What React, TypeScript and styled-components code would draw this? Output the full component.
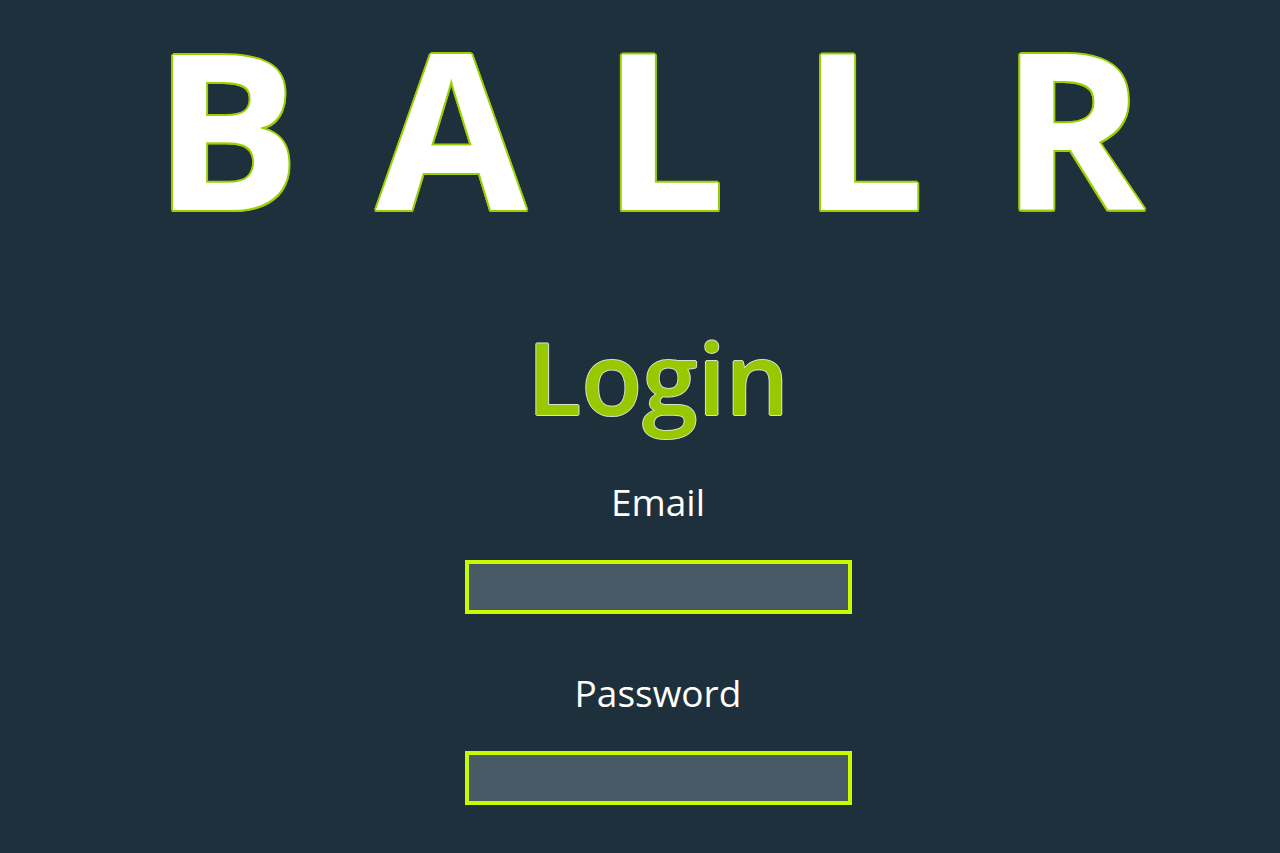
import React from "react";
import styled, { createGlobalStyle } from "styled-components";

const Global = createGlobalStyle`
  html, body { margin: 0; padding: 0; }
  body {
    background: #1e303b;
    font-family: "Open Sans", "Noto Sans", sans-serif;
    min-height: 853px;
  }
`;

const Page = styled.main`
  display: flex;
  flex-direction: column;
  align-items: center;
  padding-left: 36px;
  min-height: 853px;
  box-sizing: border-box;
`;

const Brand = styled.h1`
  margin: 6px 0 0 0;
  padding-left: 58px;
  font-size: 218px;
  line-height: 1.1;
  font-weight: 700;
  color: #ffffff;
  letter-spacing: 76px;
  white-space: nowrap;
  text-shadow:
    2px 0 0 #9ccf00, -2px 0 0 #9ccf00, 0 2px 0 #9ccf00, 0 -2px 0 #9ccf00,
    1.5px 1.5px 0 #9ccf00, -1.5px 1.5px 0 #9ccf00, 1.5px -1.5px 0 #9ccf00, -1.5px -1.5px 0 #9ccf00;
`;

const Title = styled.h2`
  margin: 80px 0 0 0;
  font-size: 100px;
  line-height: 1;
  font-weight: 600;
  color: #97c800;
  text-shadow:
    1px 0 0 #d8e0d0, -1px 0 0 #d8e0d0, 0 1px 0 #d8e0d0, 0 -1px 0 #d8e0d0;
`;

const Form = styled.form`
  display: flex;
  flex-direction: column;
  align-items: center;
`;

const Label = styled.label<{ $first?: boolean }>`
  margin-top: ${(p) => (p.$first ? "57px" : "60px")};
  font-size: 37px;
  line-height: 1;
  color: #ffffff;
`;

const Input = styled.input`
  margin-top: 40px;
  width: 387px;
  height: 54px;
  box-sizing: border-box;
  border: 4px solid #c8fa00;
  background: #475a66;
  outline: none;
  color: #ffffff;
  font-size: 20px;
  padding: 0 10px;
`;

export default function App() {
  return (
    <>
      <Global />
      <Page>
        <Brand>BALLR</Brand>
        <Title>Login</Title>
        <Form onSubmit={(e) => e.preventDefault()}>
          <Label $first htmlFor="email">Email</Label>
          <Input id="email" type="email" />
          <Label htmlFor="password">Password</Label>
          <Input id="password" type="password" />
        </Form>
      </Page>
    </>
  );
}
